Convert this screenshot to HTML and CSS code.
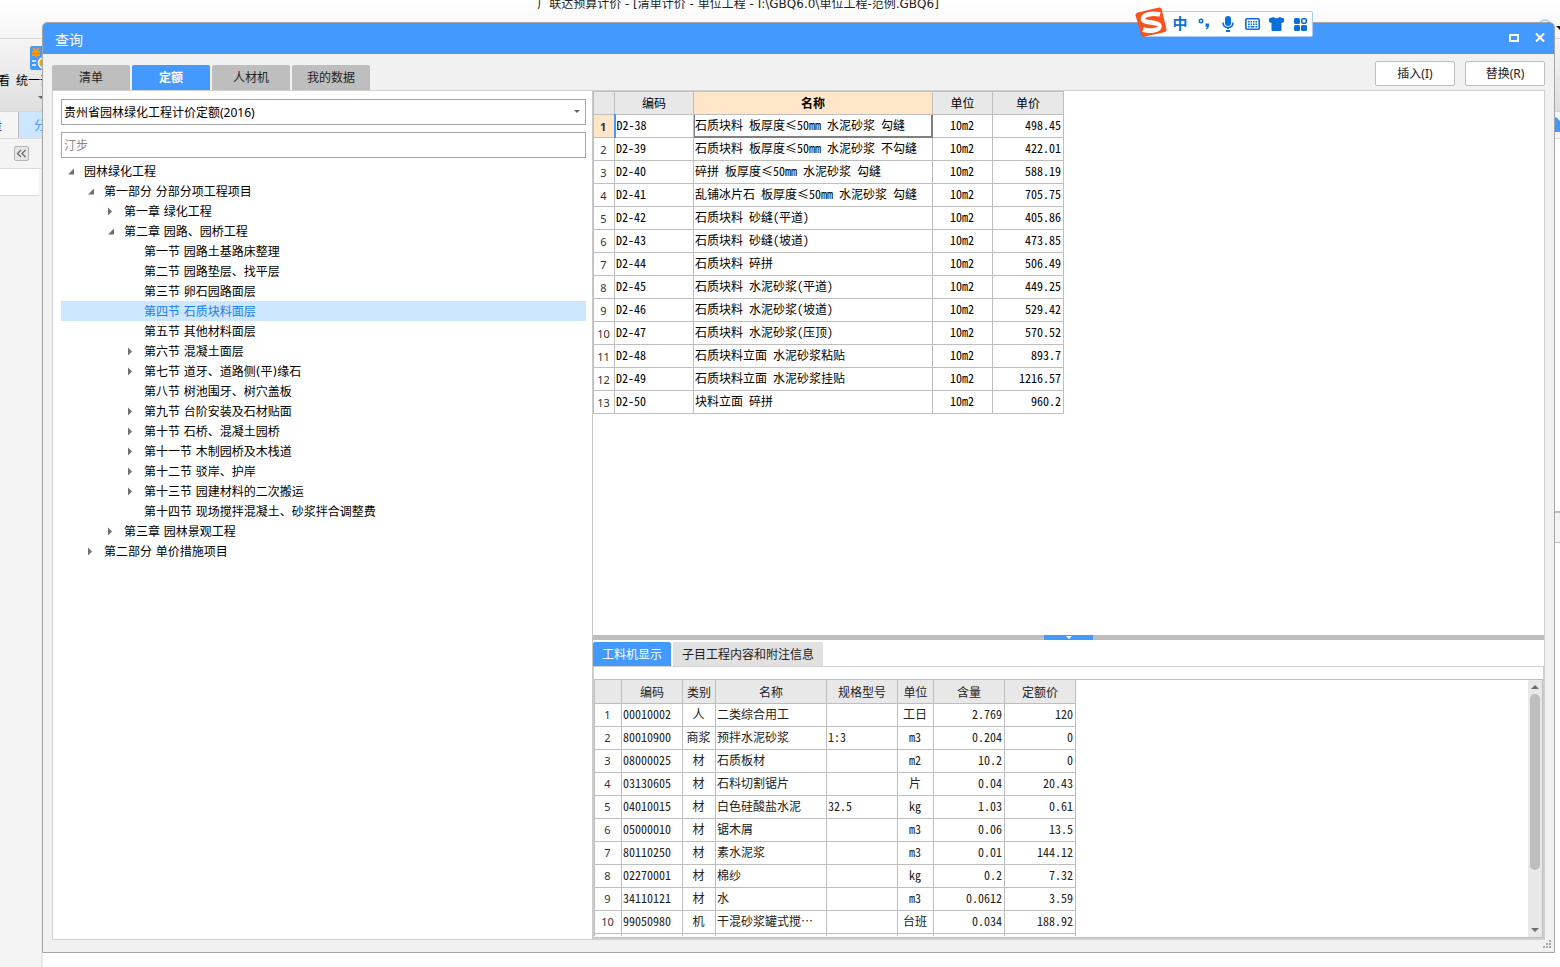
FILE: index.html
```html
<!DOCTYPE html>
<html lang="zh-CN">
<head>
<meta charset="utf-8">
<title>查询</title>
<link rel="stylesheet" href="styles.css">
</head>
<body>
<div class="app">
  <header class="app-title">
    <span>广联达预算计价 - [清单计价 - 单位工程 - I:\GBQ6.0\单位工程-范例.GBQ6]</span>
    <svg class="help" width="22" height="16" viewBox="0 0 22 16" aria-hidden="true"><circle cx="7" cy="7" r="6" fill="#e8f3fd" stroke="#a9d0f2" stroke-width="1.500"/><path d="M18 7h8l-4 4z" fill="#111"/></svg>
  </header>
  <div class="app-ribbon">
    <span class="ribbon-item">看</span>
    <span class="ribbon-item ribbon-icon">
      <svg width="24" height="24" viewBox="0 0 24 24" aria-hidden="true"><rect width="22" height="24" rx="2" fill="#4499ff"/><path d="M3 2l3 3 3-3M2 6h8M2 9h8M6 5v6" stroke="#f90" stroke-width="2" fill="none"/><path d="M2 15h4M2 19h4" stroke="#fff" stroke-width="1.500"/><circle cx="14" cy="17" r="5.500" fill="#f90" stroke="#fff" stroke-width="1.500"/><path d="M13 15h4M13 18h4" stroke="#fff" stroke-width="1.500"/></svg>
      <span>统一调</span>
      <i class="caret"></i>
    </span>
  </div>
  <div class="app-tabs"><span class="app-tab">量</span><span class="app-tab app-tab-on">分部</span>
    <svg class="home" width="14" height="16" viewBox="0 0 14 16" aria-hidden="true"><path d="M7 0l7 7v2h-3v6H2V9H0V7z" fill="#4499ff"/></svg>
  </div>
  <div class="app-body">
    <aside class="app-side">
      <div class="side-head"><button class="collapse" type="button" aria-label="收起"><svg width="11" height="9" viewBox="0 0 11 9"><path d="M5 1L1.500 4.500 5 8M9.500 1L6 4.500 9.500 8" fill="none" stroke="#666" stroke-width="1.200"/></svg></button></div>
      <div class="side-row"></div>
    </aside>
    <div class="app-doc"><div class="doc-corner"><div class="doc-bar"></div></div></div>
  </div>
</div>

<main class="window">
  <header class="titlebar">
    <h1>查询</h1>
    <button type="button" aria-label="最大化"><svg width="10" height="8" viewBox="0 0 10 8"><rect x="1" y="1" width="8" height="6" fill="none" stroke="#fff" stroke-width="2"/></svg></button>
    <button type="button" aria-label="关闭"><svg width="10" height="9" viewBox="0 0 10 9"><path d="M1 .5L9 8.500M9 .5L1 8.500" stroke="#fff" stroke-width="2"/></svg></button>
  </header>
  <div class="toolbar">
    <nav class="tabs">
      <button type="button">清单</button>
      <button type="button" class="on">定额</button>
      <button type="button">人材机</button>
      <button type="button">我的数据</button>
    </nav>
    <div class="actions">
      <button type="button">插入(I)</button>
      <button type="button">替换(R)</button>
    </div>
  </div>
  <div class="content">
    <section class="left">
      <div class="combo">
        <select aria-label="定额库"><option>贵州省园林绿化工程计价定额(2016)</option></select>
        <i class="caret"></i>
      </div>
      <input class="search" type="text" placeholder="汀步" aria-label="搜索">
      <ul class="tree">
        <li class="d0 open">园林绿化工程</li>
        <li class="d1 open">第一部分 分部分项工程项目</li>
        <li class="d2 shut">第一章 绿化工程</li>
        <li class="d2 open">第二章 园路、园桥工程</li>
        <li class="d3">第一节 园路土基路床整理</li>
        <li class="d3">第二节 园路垫层、找平层</li>
        <li class="d3">第三节 卵石园路面层</li>
        <li class="d3 sel">第四节 石质块料面层</li>
        <li class="d3">第五节 其他材料面层</li>
        <li class="d3 shut">第六节 混凝土面层</li>
        <li class="d3 shut">第七节 道牙、道路侧(平)缘石</li>
        <li class="d3">第八节 树池围牙、树穴盖板</li>
        <li class="d3 shut">第九节 台阶安装及石材贴面</li>
        <li class="d3 shut">第十节 石桥、混凝土园桥</li>
        <li class="d3 shut">第十一节 木制园桥及木栈道</li>
        <li class="d3 shut">第十二节 驳岸、护岸</li>
        <li class="d3 shut">第十三节 园建材料的二次搬运</li>
        <li class="d3">第十四节 现场搅拌混凝土、砂浆拌合调整费</li>
        <li class="d2 shut">第三章 园林景观工程</li>
        <li class="d1 shut">第二部分 单价措施项目</li>
      </ul>
    </section>
    <section class="right">
      <div class="upper">
        <table class="grid items">
          <colgroup><col class="w21"><col class="w79"><col class="w239"><col class="w60"><col class="w71"></colgroup>
          <thead><tr><th></th><th>编码</th><th class="hot">名称</th><th>单位</th><th>单价</th></tr></thead>
          <tbody>
            <tr class="cur"><th>1</th><td>D2-38</td><td class="focus">石质块料 板厚度≤50mm 水泥砂浆 勾缝</td><td>10m2</td><td>498.45</td></tr>
            <tr><th>2</th><td>D2-39</td><td>石质块料 板厚度≤50mm 水泥砂浆 不勾缝</td><td>10m2</td><td>422.01</td></tr>
            <tr><th>3</th><td>D2-40</td><td>碎拼 板厚度≤50mm 水泥砂浆 勾缝</td><td>10m2</td><td>588.19</td></tr>
            <tr><th>4</th><td>D2-41</td><td>乱铺冰片石 板厚度≤50mm 水泥砂浆 勾缝</td><td>10m2</td><td>705.75</td></tr>
            <tr><th>5</th><td>D2-42</td><td>石质块料 砂缝(平道)</td><td>10m2</td><td>405.86</td></tr>
            <tr><th>6</th><td>D2-43</td><td>石质块料 砂缝(坡道)</td><td>10m2</td><td>473.85</td></tr>
            <tr><th>7</th><td>D2-44</td><td>石质块料 碎拼</td><td>10m2</td><td>506.49</td></tr>
            <tr><th>8</th><td>D2-45</td><td>石质块料 水泥砂浆(平道)</td><td>10m2</td><td>449.25</td></tr>
            <tr><th>9</th><td>D2-46</td><td>石质块料 水泥砂浆(坡道)</td><td>10m2</td><td>529.42</td></tr>
            <tr><th>10</th><td>D2-47</td><td>石质块料 水泥砂浆(压顶)</td><td>10m2</td><td>570.52</td></tr>
            <tr><th>11</th><td>D2-48</td><td>石质块料立面 水泥砂浆粘贴</td><td>10m2</td><td>893.7</td></tr>
            <tr><th>12</th><td>D2-49</td><td>石质块料立面 水泥砂浆挂贴</td><td>10m2</td><td>1216.57</td></tr>
            <tr><th>13</th><td>D2-50</td><td>块料立面 碎拼</td><td>10m2</td><td>960.2</td></tr>
          </tbody>
        </table>
      </div>
      <div class="splitter"><button type="button" aria-label="折叠"><i class="caret"></i></button></div>
      <nav class="subtabs">
        <button type="button" class="on">工料机显示</button>
        <button type="button">子目工程内容和附注信息</button>
      </nav>
      <div class="lower">
        <div class="gridbox">
          <div class="scroller">
            <table class="grid parts">
              <colgroup><col class="w27"><col class="w61"><col class="w33"><col class="w111"><col class="w71"><col class="w36"><col class="w71"><col class="w71"></colgroup>
              <thead><tr><th></th><th>编码</th><th>类别</th><th>名称</th><th>规格型号</th><th>单位</th><th>含量</th><th>定额价</th></tr></thead>
              <tbody>
                <tr><th>1</th><td>00010002</td><td>人</td><td>二类综合用工</td><td></td><td>工日</td><td>2.769</td><td>120</td></tr>
                <tr><th>2</th><td>80010900</td><td>商浆</td><td>预拌水泥砂浆</td><td>1:3</td><td>m3</td><td>0.204</td><td>0</td></tr>
                <tr><th>3</th><td>08000025</td><td>材</td><td>石质板材</td><td></td><td>m2</td><td>10.2</td><td>0</td></tr>
                <tr><th>4</th><td>03130605</td><td>材</td><td>石料切割锯片</td><td></td><td>片</td><td>0.04</td><td>20.43</td></tr>
                <tr><th>5</th><td>04010015</td><td>材</td><td>白色硅酸盐水泥</td><td>32.5</td><td>kg</td><td>1.03</td><td>0.61</td></tr>
                <tr><th>6</th><td>05000010</td><td>材</td><td>锯木屑</td><td></td><td>m3</td><td>0.06</td><td>13.5</td></tr>
                <tr><th>7</th><td>80110250</td><td>材</td><td>素水泥浆</td><td></td><td>m3</td><td>0.01</td><td>144.12</td></tr>
                <tr><th>8</th><td>02270001</td><td>材</td><td>棉纱</td><td></td><td>kg</td><td>0.2</td><td>7.32</td></tr>
                <tr><th>9</th><td>34110121</td><td>材</td><td>水</td><td></td><td>m3</td><td>0.0612</td><td>3.59</td></tr>
                <tr><th>10</th><td>99050980</td><td>机</td><td>干混砂浆罐式搅⋯</td><td></td><td>台班</td><td>0.034</td><td>188.92</td></tr>
                <tr><th></th><td></td><td></td><td></td><td></td><td></td><td></td><td></td></tr>
              </tbody>
            </table>
          </div>
          <div class="scrollbar"><i class="up"></i><div class="track"><div class="thumb"></div></div><i class="down"></i></div>
        </div>
      </div>
    </section>
  </div>
  <svg class="grip" width="8" height="8" viewBox="0 0 8 8" aria-hidden="true"><path d="M6 0h2v2h-2zM3 3h2v2h-2zM6 3h2v2h-2zM0 6h2v2h-2zM3 6h2v2h-2zM6 6h2v2h-2z" fill="#a6a6a6"/></svg>
</main>

<div class="ime">
  <svg class="ime-logo" width="32" height="31" viewBox="0 0 32 31" aria-hidden="true"><path d="M3 5.500L24 .6q2-.4 2.600 1.500L31.500 22q.5 2.200-1.500 3L9 29.800q-2 .4-2.700-1.600L.6 8.600Q.2 6.300 3 5.500z" fill="#f9521c"/><path d="M25 7.500C17 5.500 7 8 8 12.500c1 4 16 2 16.500 6.500.4 4-9 6-16.500 3.500" fill="none" stroke="#fff" stroke-width="4.600"/></svg>
  <span class="ime-zh">中</span>
  <svg width="12" height="12" viewBox="0 0 12 12" aria-hidden="true"><circle cx="3" cy="3" r="1.700" fill="none" stroke="#0a6edb" stroke-width="1.600"/><path d="M7.500 5.500h3.500v2.500q0 2.500-2.500 3.500l-.7-1q1.200-.6 1.200-1.700H7.500z" fill="#0a6edb"/></svg>
  <svg width="12" height="16" viewBox="0 0 12 16" aria-hidden="true"><rect x="3" width="6" height="10" rx="3" fill="#0a6edb"/><path d="M1 6.500q0 5 5 5t5-5" fill="none" stroke="#0a6edb" stroke-width="1.600"/><path d="M6 11.500V13M4 15h4" stroke="#0a6edb" stroke-width="2"/></svg>
  <svg width="15" height="12" viewBox="0 0 15 12" aria-hidden="true"><rect x=".8" y=".8" width="13.400" height="10.400" rx="1" fill="none" stroke="#0a6edb" stroke-width="1.600"/><path d="M3 3.800h9M3 6.200h9" stroke="#0a6edb" stroke-width="1.500" stroke-dasharray="1.500 1"/><path d="M3 8.700h1.500M5.500 8.700h4M10.500 8.700H12" stroke="#0a6edb" stroke-width="1.500"/></svg>
  <svg width="15" height="14" viewBox="0 0 15 14" aria-hidden="true"><path d="M0 1.500L4.500 0q3 2.500 6 0L15 1.500V5l-2.500 1V13q0 1-1 1h-8q-1 0-1-1V6L0 5z" fill="#0a6edb"/></svg>
  <svg width="13" height="13" viewBox="0 0 13 13" aria-hidden="true"><g fill="#0a6edb"><rect width="6" height="6" rx="1.500"/><rect y="7" width="6" height="6" rx="1.500"/><rect x="7" y="7" width="6" height="6" rx="1.500"/></g><rect x="7.800" y=".8" width="4.400" height="4.400" rx="1" fill="none" stroke="#0a6edb" stroke-width="1.600"/></svg>
</div>
</body>
</html>
```

FILE: styles.css
```css
* { box-sizing: border-box; }

body {
  margin: 0;
  height: 100vh;
  overflow: hidden;
  position: relative;
  background: #fff;
  color: #000;
  font: 12px/20px "DejaVu Sans", "Noto Sans CJK SC", sans-serif;
}

button, input, select { font: inherit; color: inherit; }
button { border: 0; padding: 0; }

.caret {
  display: block;
  width: 0;
  height: 0;
  border: 3px solid transparent;
  border-top-color: #666;
  border-bottom: 0;
}

/* Main application behind the dialog */
.app { height: 100%; display: flex; flex-direction: column; }

.app-title {
  height: 38px;
  display: flex;
  overflow: hidden;
  text-align: center;
  line-height: 8px;
  color: #222;
  background: linear-gradient(#fff, #f5f5f5);
}
.app-title span { flex: 1; padding-right: 62px; }
.help { margin-top: 19px; }

.app-ribbon {
  height: 74px;
  display: flex;
  gap: 6px;
  border: solid #d4d4d4;
  border-width: 1px 0;
  background: linear-gradient(#f5f5f5, #dedede);
}

.ribbon-item { width: 10px; padding-top: 32px; display: flex; justify-content: flex-end; }
.ribbon-icon { width: 48px; padding-top: 7px; flex-direction: column; justify-content: flex-start; gap: 1px; }
.ribbon-icon svg { margin-left: 14px; }
.ribbon-icon .caret { margin: 4px 0 0 22px; }

.app-tabs { height: 26px; display: flex; background: #f5f5f5; color: #4499ff; line-height: 28px; }
.app-tab { width: 19px; display: flex; justify-content: flex-end; padding-right: 16px; border-right: 1px solid #bbb; color: #123; }
.app-tab-on { width: 60px; justify-content: flex-start; padding-left: 15px; background: #cce6ff; border: 0; color: #4499ff; }
.home { margin: 5px -3px 0 auto; }

.app-body { flex: 1; display: flex; border-top: 1px solid #dcdcdc; }
.app-side { width: 43px; background: #f4f4f4; border-right: 2px solid #e9e9e9; }
.side-head { height: 30px; padding: 7px 0 0 14px; border-bottom: 1px solid #dcdcdc; }
.side-row { height: 27px; margin-right: 2px; background: #fff; border-bottom: 1px solid #dcdcdc; }
.collapse {
  width: 15px;
  height: 15px;
  display: grid;
  place-items: center;
  background: #e6e6e6;
  border: 1px solid #b5b5b5;
  border-radius: 2px;
}
.app-doc { flex: 1; display: flex; justify-content: flex-end; background: #fff; }
.doc-corner { width: 5px; height: 404px; display: flex; align-items: flex-end; }
.doc-bar { width: 5px; height: 32px; background: #f4f4f4; border: solid #bbb; border-width: 2px 0 1px; }

/* Dialog window */
.window {
  position: absolute;
  inset: 22px 5px 14px 42px;
  display: flex;
  flex-direction: column;
  background: #f1f1f1;
  border: 1px solid #a6a6a6;
  border-radius: 5px 5px 0 0;
}

.titlebar {
  height: 31px;
  flex: none;
  display: flex;
  align-items: center;
  gap: 16px;
  padding: 0 9px 2px 12px;
  background: #4499ff;
  border-radius: 4px 4px 0 0;
  color: #fff;
}
.titlebar h1 { margin: 4px auto 0 0; font-size: 14px; font-weight: 400; }
.titlebar button { display: flex; background: none; }

.toolbar {
  height: 36px;
  flex: none;
  display: flex;
  justify-content: space-between;
  align-items: flex-end;
  padding: 0 9px;
}

.tabs { display: flex; gap: 2px; }
.tabs button { width: 78px; height: 25px; background: #bebebe; border-radius: 2px 2px 0 0; color: #222; }
.tabs .on { background: #4499ff; color: #fff; font-weight: 700; }

.actions { display: flex; gap: 10px; margin-bottom: 4px; font-family: "Noto Sans", "Noto Sans CJK SC", sans-serif; }
.actions button { width: 80px; height: 25px; background: #fff; border: 1px solid #bebebe; border-radius: 2px; color: #222; }

.content {
  flex: 1;
  min-height: 0;
  display: flex;
  margin: 0 9px 12px;
  border: 1px solid #d0d0d0;
  background: #fff;
}

.left {
  width: 540px;
  flex: none;
  padding: 8px 6px 0 8px;
  border-right: 1px solid #c8c8c8;
  display: flex;
  flex-direction: column;
}

.combo { position: relative; height: 26px; margin-bottom: 7px; font-family: "Noto Sans", "Noto Sans CJK SC", sans-serif; }
.combo select { width: 100%; height: 26px; padding: 2px 2px 0; appearance: none; background: #fff; border: 1px solid #a6a6a6; border-radius: 0; }
.combo .caret { position: absolute; right: 6px; top: 11px; }

.search { width: 100%; height: 26px; padding: 2px 2px 0; background: #fff; border: 1px solid #a6a6a6; }
.search::placeholder { color: #888; }

.tree { list-style: none; margin: 3px 0 0; padding: 0; }
.tree li { height: 20px; padding-top: 2px; display: flex; align-items: center; white-space: pre; }
.tree li::before { content: ""; width: 18px; height: 9px; flex: none; margin-bottom: 2px; }
.tree .open::before { background: #707070; clip-path: polygon(2px 8px, 8px 8px, 8px 2px); }
.tree .shut::before { background: #707070; clip-path: polygon(2px 1px, 6px 5px, 2px 9px); }
.d0 { padding-left: 5px; }
.d1 { padding-left: 25px; }
.d2 { padding-left: 45px; }
.d3 { padding-left: 65px; }
.tree .sel { background: #cce7ff; color: #1a7cf0; }

.right { flex: 1; min-width: 0; display: flex; flex-direction: column; }
.upper { flex: 1; min-height: 0; overflow: hidden; }

/* Data grids: half-width Latin forms align with full-width characters */
.grid {
  border-collapse: collapse;
  table-layout: fixed;
  width: 0;
  font-family: "Noto Sans CJK SC", sans-serif;
  font-feature-settings: "hwid";
  line-height: 18px;
}
.grid th, .grid td { height: 23px; padding: 0 2px; border: 1px solid #bebebe; white-space: nowrap; overflow: hidden; }
.grid td { padding: 0 2px 2px 1px; }
.grid th { font-weight: 400; }
.grid thead th { background: #e8e8e8; }
.grid tbody th { padding: 1px 1px 0 0; font: 11px/18px "Noto Sans", sans-serif; font-feature-settings: normal; color: #333; }
.w21 { width: 21px; } .w27 { width: 27px; } .w33 { width: 33px; } .w36 { width: 36px; }
.w60 { width: 60px; } .w61 { width: 61px; } .w71 { width: 71px; } .w79 { width: 79px; }
.w111 { width: 111px; } .w239 { width: 239px; }

.items td:nth-child(4) { text-align: center; }
.items td:nth-child(5) { text-align: right; }
.items thead .hot { background: #ffe6c8; font-weight: 700; }
.items .cur th { background: #ffe6c8; font-weight: 700; border-right: 2px solid #4499ff; }
.items .focus { box-shadow: inset -1px -1px #808080, inset 1px 0 #808080; border-color: #4499ff #808080 #808080; }

.parts { color: #222; margin-top: -1px; }
.parts thead th { height: 24px; }
.parts tbody th { padding-top: 0; }
.parts td:nth-child(3), .parts td:nth-child(6) { text-align: center; }
.parts td:nth-child(7), .parts td:nth-child(8) { text-align: right; }

.splitter { height: 5px; flex: none; display: flex; justify-content: center; background: #bebebe; }
.splitter button { width: 49px; display: grid; place-items: center; background: #4499ff; }
.splitter .caret { border-top-color: #fff; }

.subtabs { flex: none; display: flex; gap: 2px; padding-top: 2px; border-bottom: 1px solid #d0d0d0; }
.subtabs button { height: 24px; padding: 2px 9px 0; background: #e1e1e1; border-radius: 2px 2px 0 0; color: #222; }
.subtabs .on { background: #4499ff; color: #fff; }

.lower { flex: none; padding-top: 12px; border: solid #d0d0d0; border-width: 0 1px 1px; }
.gridbox { height: 259px; display: flex; border: solid #bebebe; border-width: 1px 1px 1px 0; }
.scroller { flex: 1; height: 256px; overflow: hidden; }

.scrollbar { width: 14px; display: flex; flex-direction: column; align-items: center; background: #e8e8e8; padding: 5px 0; }
.scrollbar i { border: 4px solid transparent; }
.scrollbar .up { border-bottom-color: #6b6b78; border-top: 0; }
.scrollbar .down { border-top-color: #6b6b78; border-bottom: 0; }
.track { flex: 1; width: 10px; padding: 5px 0; }
.thumb { height: 77%; background: #bebebe; border-radius: 5px; }

.grip { position: absolute; right: 3px; bottom: 4px; }

/* Floating input-method bar */
.ime {
  position: absolute;
  left: 1144px;
  top: 11px;
  width: 169px;
  height: 26px;
  display: grid;
  grid-template-columns: repeat(6, 24px);
  place-items: center;
  padding-left: 23px;
  background: #fff;
  border: 1px solid #a9cdf5;
  border-radius: 2px;
}
.ime-logo { position: absolute; left: -10px; top: -5px; }
.ime-zh { font-size: 15px; font-weight: 700; color: #0a6edb; }
```
